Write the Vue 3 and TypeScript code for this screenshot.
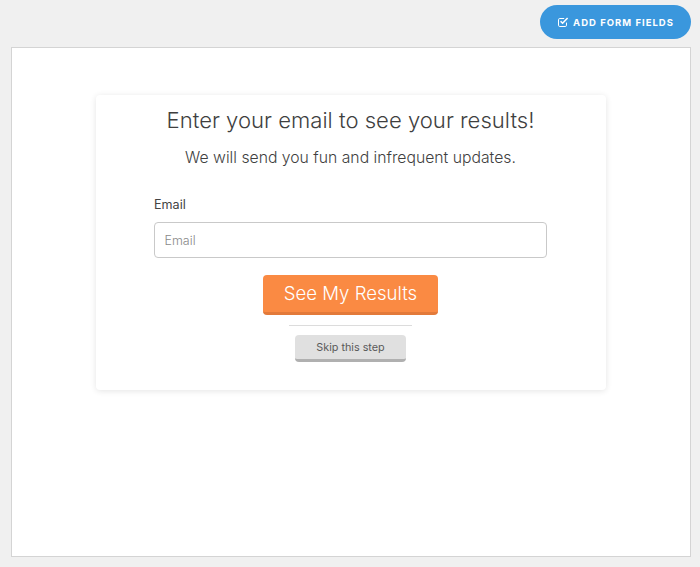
<script setup lang="ts">
const title = 'Enter your email to see your results!'
const subtitle = 'We will send you fun and infrequent updates.'
</script>

<template>
  <div class="page">
    <div class="toolbar">
      <button class="add-btn" type="button">
        <svg class="add-icon" viewBox="0 0 12 12" width="12" height="12" aria-hidden="true">
          <path d="M9.5 6.6V9.2A1.3 1.3 0 0 1 8.2 10.5H2.8A1.3 1.3 0 0 1 1.5 9.2V3.8A1.3 1.3 0 0 1 2.8 2.5H7.2" fill="none" stroke="currentColor" stroke-width="1" />
          <path d="M3.6 5.2L5.6 7.2L10.6 2" fill="none" stroke="currentColor" stroke-width="1.6" />
        </svg>
        <span>ADD FORM FIELDS</span>
      </button>
    </div>
    <div class="frame">
      <div class="card">
        <h1 class="title">{{ title }}</h1>
        <p class="subtitle">{{ subtitle }}</p>
        <form class="form" @submit.prevent>
          <label class="label" for="email">Email</label>
          <input id="email" class="input" type="text" placeholder="Email" />
          <button class="submit" type="submit">See My Results</button>
          <hr class="rule" />
          <button class="skip" type="button">Skip this step</button>
        </form>
      </div>
    </div>
  </div>
</template>

<style>
html, body { margin: 0; background: #f0f0f0; }
</style>

<style scoped>
.page {
  width: 700px;
  height: 567px;
  box-sizing: border-box;
  padding: 5px 9px 10px 11px;
  display: flex;
  flex-direction: column;
  background: #f0f0f0;
  font-family: Inter, Lato, sans-serif;
  color: #4a4a4a;
}
.toolbar { display: flex; justify-content: flex-end; height: 34px; margin-bottom: 8px; }
.add-btn {
  width: 151px;
  height: 34px;
  display: flex;
  align-items: center;
  justify-content: center;
  gap: 4px;
  padding: 0;
  border: 0;
  border-radius: 17px;
  background: #3a97dd;
  color: #fff;
  font: 700 9.5px Inter, sans-serif;
  letter-spacing: 1px;
}
.add-icon { flex: none; }
.frame {
  flex: 1;
  box-sizing: border-box;
  border: 1px solid #d4d4d4;
  background: #fff;
  padding-top: 47px;
  display: flex;
  justify-content: center;
}
.card {
  width: 510px;
  height: 295px;
  box-sizing: border-box;
  padding: 10px 59px 0 58px;
  border-radius: 4px;
  background: #fff;
  box-shadow: 0 1px 6px rgba(0, 0, 0, 0.11);
  text-align: center;
}
.title { margin: 0; font-size: 22.1px; line-height: 30px; font-weight: 300; color: #3f3f3f; }
.subtitle { margin: 12px 0 0; font-size: 15.75px; line-height: 22px; font-weight: 300; color: #3f3f3f; }
.form { display: flex; flex-direction: column; align-items: center; margin-top: 28px; }
.label { align-self: flex-start; font-size: 12.6px; line-height: 16px; font-weight: 400; color: #444; }
.input {
  width: 100%;
  height: 36px;
  margin-top: 9px;
  box-sizing: border-box;
  padding: 0 9.5px;
  border: 1px solid #c9c9c9;
  border-radius: 4px;
  background: #fff;
  font: 300 12.5px Inter, sans-serif;
  color: #444;
}
.input::placeholder { color: #8a8a8a; opacity: 1; }
.submit {
  width: 175px;
  height: 40px;
  margin-top: 17px;
  padding: 0 0 2px;
  border: 0;
  border-bottom: 3px solid #e37a3a;
  border-radius: 4px;
  background: #fa8a43;
  color: #fff;
  font: 300 18.6px Inter, sans-serif;
}
.rule { width: 123px; height: 1px; margin: 10px 0 0; border: 0; background: #dcdcdc; }
.skip {
  width: 111px;
  height: 27px;
  margin-top: 9px;
  padding: 0;
  border: 0;
  border-bottom: 3px solid #b0b0b0;
  border-radius: 4px;
  background: #e0e0e0;
  color: #5a5a5a;
  font: 400 10.8px Inter, sans-serif;
}
</style>
